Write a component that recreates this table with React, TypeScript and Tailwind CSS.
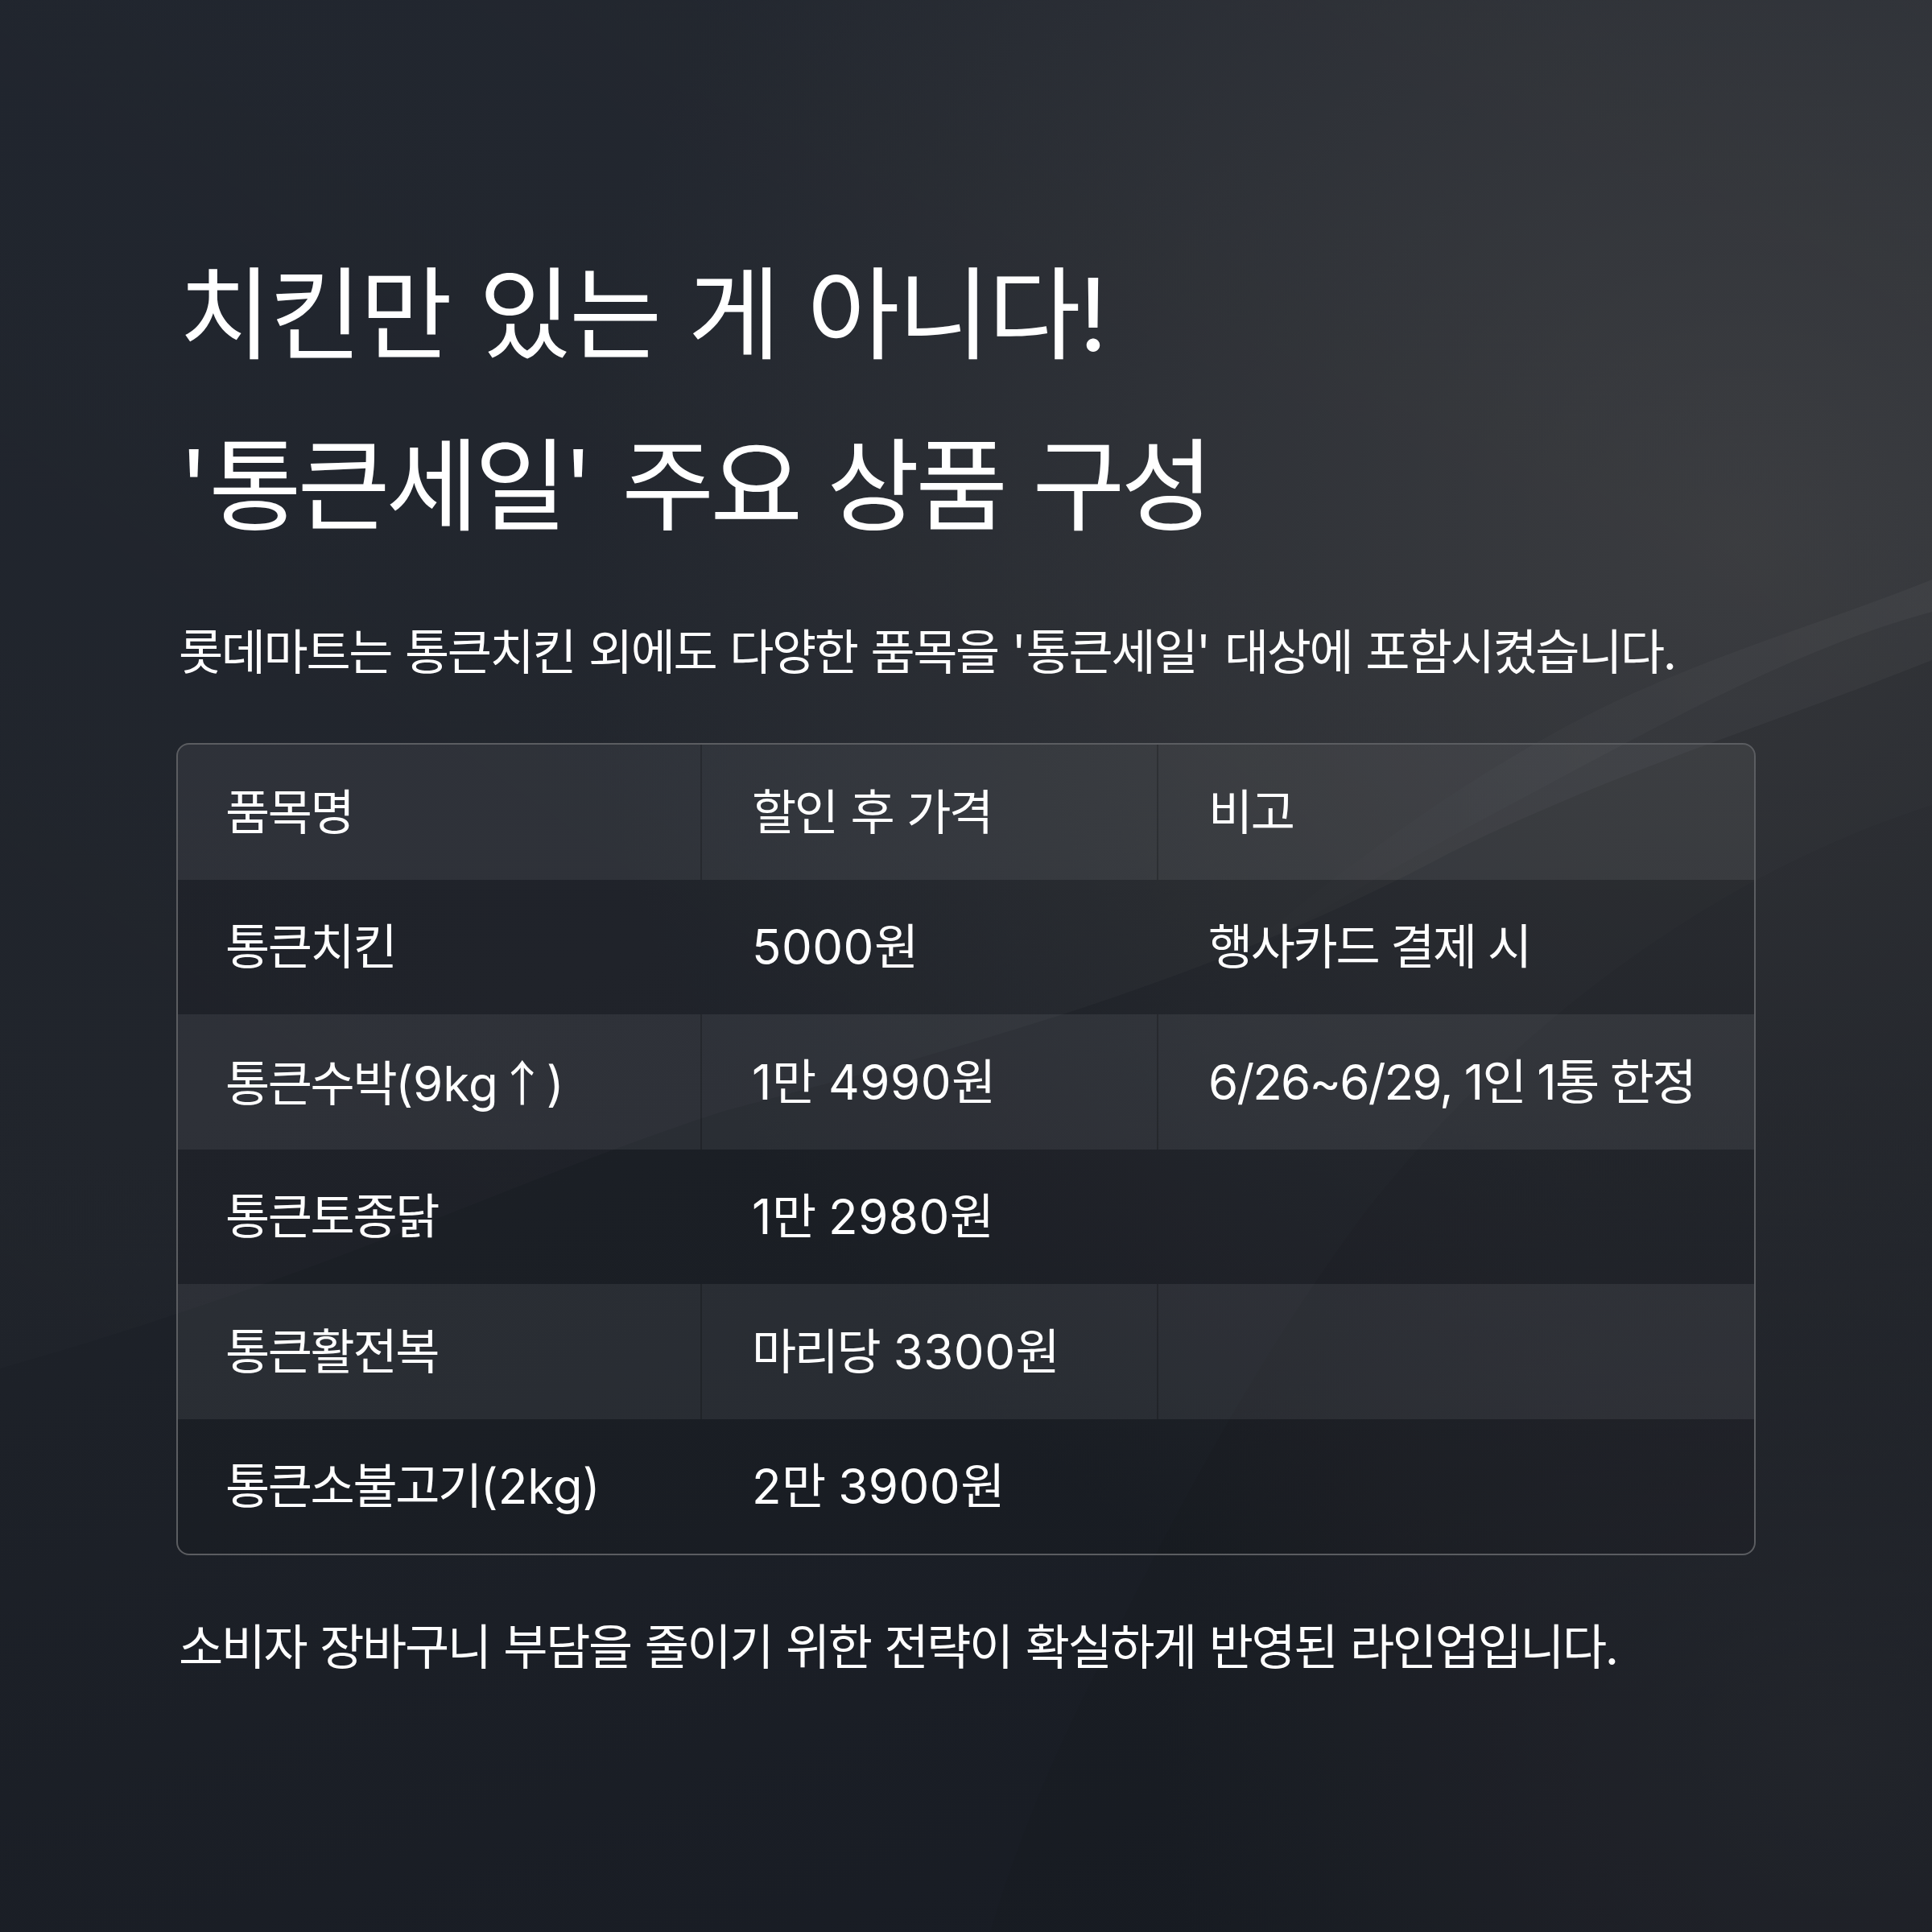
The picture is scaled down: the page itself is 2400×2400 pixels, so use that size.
import React from "react";

const HANGUL = /([\uAC00-\uD7A3\u3131-\u318E]+|↑)/;

// hangul runs get a touch tighter tracking, latin/digit runs stay on Inter's spacing
function Txt({
  s,
  tight = "tracking-[-0.04em]",
  latin = "",
}: {
  s: string;
  tight?: string;
  latin?: string;
}) {
  return (
    <span>
      {s.split(HANGUL).map((part, i) => {
        if (!part) return null;
        if (part === "↑")
          return (
            <span key={i} className="font-['Noto_Sans_CJK_KR',sans-serif]">
              {part}
            </span>
          );
        if (i % 2 === 1)
          return (
            <span key={i} className={tight}>
              {part}
            </span>
          );
        return (
          <span key={i} className={latin}>
            {part}
          </span>
        );
      })}
    </span>
  );
}

const rows = [
  { name: "통큰치킨", price: "5000원", note: "행사카드 결제 시" },
  { name: "통큰수박(9kg↑)", price: "1만 4990원", note: "6/26~6/29, 1인 1통 한정" },
  { name: "통큰토종닭", price: "1만 2980원", note: "" },
  { name: "통큰활전복", price: "마리당 3300원", note: "" },
  { name: "통큰소불고기(2kg)", price: "2만 3900원", note: "" },
];

export default function App() {
  return (
    <div className="relative w-[2400px] h-[2400px] overflow-hidden bg-[linear-gradient(160deg,#1b2029_0%,#1e2229_45%,#171b23_100%)] text-white font-[Inter,'Noto_Sans_CJK_KR',sans-serif]">
      {/* soft background light + waves */}
      <svg
        className="absolute inset-0 pointer-events-none"
        width="2400"
        height="2400"
        viewBox="0 0 2400 2400"
      >
        <defs>
          <radialGradient id="glow" cx="0.9" cy="0.28" r="0.6">
            <stop offset="0" stopColor="#3a3b3e" stopOpacity="0.8" />
            <stop offset="1" stopColor="#3a3b3e" stopOpacity="0" />
          </radialGradient>
          <radialGradient id="glow2" cx="0.95" cy="0.9" r="0.35">
            <stop offset="0" stopColor="#2c2e33" stopOpacity="0.6" />
            <stop offset="1" stopColor="#2c2e33" stopOpacity="0" />
          </radialGradient>
          <linearGradient id="wave" x1="1" y1="0" x2="0" y2="1">
            <stop offset="0" stopColor="#ffffff" stopOpacity="0.04" />
            <stop offset="1" stopColor="#ffffff" stopOpacity="0.01" />
          </linearGradient>
          <linearGradient id="ribbon" x1="1" y1="0" x2="0" y2="0">
            <stop offset="0" stopColor="#ffffff" stopOpacity="0.035" />
            <stop offset="1" stopColor="#ffffff" stopOpacity="0" />
          </linearGradient>
        </defs>
        <rect width="2400" height="2400" fill="url(#glow)" />
        <rect width="2400" height="2400" fill="url(#glow2)" />
        <path
          d="M2400 820 C2200 900 2000 960 1800 1060 C1500 1220 1200 1300 900 1380 C650 1460 420 1580 0 1700 L0 0 L2400 0 Z"
          fill="url(#wave)"
        />
        <path
          d="M2400 760 C2250 800 2100 880 1950 960 C1800 1040 1650 1120 1500 1220 C1650 1090 1800 980 1950 900 C2100 820 2250 780 2400 720 Z"
          fill="url(#ribbon)"
        />
        <path
          d="M2400 1000 C2150 1080 1900 1250 1700 1500 C1550 1700 1450 1900 1350 2100 C1300 2200 1260 2300 1230 2400 L2400 2400 Z"
          fill="#000000"
          fillOpacity="0.03"
        />
      </svg>

      <div className="relative pl-[222px] pr-[219px] pt-[284px]">
        <h1 className="text-[125px] leading-[213px] font-normal">
          <Txt s="치킨만 있는 게 아니다!" tight="tracking-[-0.02em]" />
          <br />
          <Txt s="'통큰세일' 주요 상품 구성" tight="tracking-[-0.04em]" />
        </h1>

        <p className="mt-[55px] text-[60px] leading-[90px]">
          <Txt s="롯데마트는 통큰치킨 외에도 다양한 품목을 '통큰세일' 대상에 포함시켰습니다." />
        </p>

        <div className="mt-[68px] -ml-[3px] w-[1962px] rounded-[16px] border-2 border-[#5b5d61] overflow-hidden text-[60px]">
          <div className="grid grid-cols-[651px_567px_1fr] h-[167.5px] bg-white/[0.06]">
            <div className="flex items-center pl-[59px] border-r-2 border-black/20">
              <Txt s="품목명" />
            </div>
            <div className="flex items-center pl-[62px] border-r-2 border-black/20">
              <Txt s="할인 후 가격" />
            </div>
            <div className="flex items-center pl-[62px]">
              <Txt s="비고" />
            </div>
          </div>
          {rows.map((r, i) => {
            const light = i % 2 === 1;
            return (
              <div
                key={r.name}
                className={
                  light
                    ? "grid grid-cols-[651px_567px_1fr] h-[167.5px] bg-white/[0.06]"
                    : "grid grid-cols-[651px_567px_1fr] h-[167.5px] bg-black/[0.06]"
                }
              >
                <div
                  className={
                    light
                      ? "flex items-center pl-[59px] border-r-2 border-black/20"
                      : "flex items-center pl-[59px] border-r-2 border-transparent"
                  }
                >
                  <Txt s={r.name} />
                </div>
                <div
                  className={
                    light
                      ? "flex items-center pl-[62px] border-r-2 border-black/20"
                      : "flex items-center pl-[62px] border-r-2 border-transparent"
                  }
                >
                  <Txt s={r.price} latin="tracking-[0.008em]" />
                </div>
                <div className="flex items-center pl-[62px]">
                  <Txt s={r.note} latin="tracking-[-0.03em]" />
                </div>
              </div>
            );
          })}
        </div>

        <p className="mt-[69px] text-[60px] leading-[90px]">
          <Txt s="소비자 장바구니 부담을 줄이기 위한 전략이 확실하게 반영된 라인업입니다." />
        </p>
      </div>
    </div>
  );
}
